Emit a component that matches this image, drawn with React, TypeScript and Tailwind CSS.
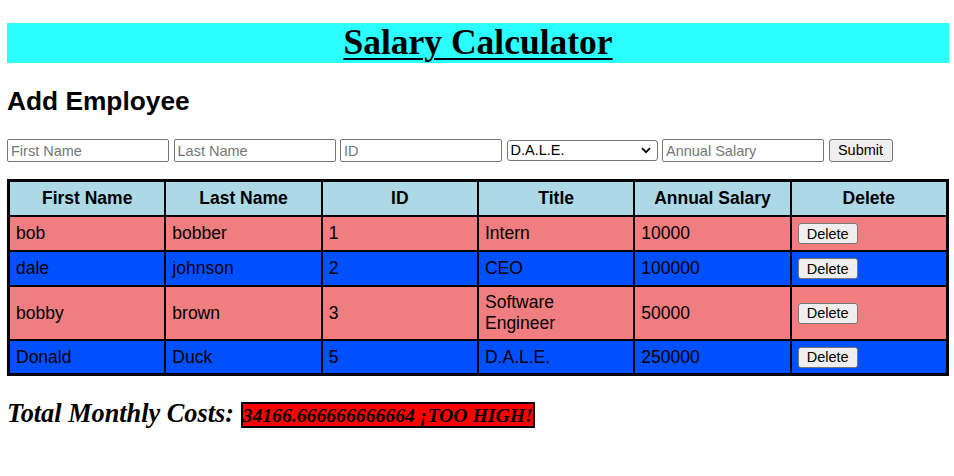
import React from "react";

const rows = [
  { first: "bob", last: "bobber", id: "1", title: "Intern", salary: "10000", bg: "bg-[#f07d80]", h: "h-[33px]" },
  { first: "dale", last: "johnson", id: "2", title: "CEO", salary: "100000", bg: "bg-[#0050ff]", h: "h-[33px]" },
  { first: "bobby", last: "brown", id: "3", title: "Software Engineer", salary: "50000", bg: "bg-[#f07d80]", h: "h-[52px]" },
  { first: "Donald", last: "Duck", id: "5", title: "D.A.L.E.", salary: "250000", bg: "bg-[#0050ff]", h: "h-[32px]" },
];

const headers = ["First Name", "Last Name", "ID", "Title", "Annual Salary", "Delete"];

function Cell({ children, bg, h }: { children: React.ReactNode; bg: string; h: string }) {
  return (
    <div className={`${bg} ${h} flex items-center px-[6px] text-[17.5px] leading-[20.6px] text-black`}>
      <div>{children}</div>
    </div>
  );
}

function DeleteButton() {
  return (
    <button className="h-[21px] w-[60px] rounded-[3px] border border-[#767676] bg-[#efefef] text-[14.5px] leading-[18px] text-black">
      Delete
    </button>
  );
}

export default function App() {
  return (
    <div className="min-h-[476px] w-[954px] bg-white pl-[7px] pt-[23px]" style={{ fontFamily: '"Liberation Sans", Arial, sans-serif' }}>
      <div className="h-[40px] w-[942px] bg-[#2bffff]">
        <h1
          className="text-center text-[35.5px] font-bold leading-[38px] text-black underline decoration-[2px] underline-offset-[4px]"
          style={{ fontFamily: '"Liberation Serif", "Times New Roman", serif' }}
        >
          Salary Calculator
        </h1>
      </div>

      <h2 className="mt-[23px] text-[26.3px] font-bold leading-[30px] text-black">Add Employee</h2>

      <div className="mt-[23px] flex items-center gap-[4.5px]">
        {["First Name", "Last Name", "ID"].map((p) => (
          <input
            key={p}
            placeholder={p}
            className="h-[23px] w-[162px] rounded-[2px] border border-[#767676] px-[3px] text-[14.5px] text-black placeholder:text-[#757575] outline-none"
          />
        ))}
        <div className="relative flex h-[21px] w-[151px] items-center rounded-[3px] border border-[#767676] bg-white px-[3px] text-[14.5px] text-black">
          <span>D.A.L.E.</span>
          <svg className="absolute right-[6px] top-[6px]" width="10" height="7" viewBox="0 0 10 7">
            <path d="M1 1.2 L5 5.2 L9 1.2" stroke="#000" strokeWidth="1.7" fill="none" />
          </svg>
        </div>
        <input
          placeholder="Annual Salary"
          className="h-[23px] w-[162px] rounded-[2px] border border-[#767676] px-[3px] text-[14.5px] text-black placeholder:text-[#757575] outline-none"
        />
        <button className="h-[23px] w-[64px] rounded-[3px] border border-[#767676] bg-[#efefef] text-[14.5px] text-black">
          Submit
        </button>
      </div>

      <div className="mt-[17px] grid w-[942px] grid-cols-6 gap-[2px] border-[3px] border-black bg-black">
        {headers.map((h) => (
          <div key={h} className="flex h-[33px] items-center justify-center bg-[#add8e6] text-[17.5px] font-bold text-black">
            {h}
          </div>
        ))}
        {rows.map((r) => (
          <React.Fragment key={r.id}>
            <Cell bg={r.bg} h={r.h}>{r.first}</Cell>
            <Cell bg={r.bg} h={r.h}>{r.last}</Cell>
            <Cell bg={r.bg} h={r.h}>{r.id}</Cell>
            <Cell bg={r.bg} h={r.h}>
              {r.title === "Software Engineer" ? (
                <>
                  Software
                  <br />
                  Engineer
                </>
              ) : (
                r.title
              )}
            </Cell>
            <Cell bg={r.bg} h={r.h}>{r.salary}</Cell>
            <Cell bg={r.bg} h={r.h}>
              <DeleteButton />
            </Cell>
          </React.Fragment>
        ))}
      </div>

      <div
        className="mt-[23px] text-[26.3px] font-bold italic leading-[30px] text-black"
        style={{ fontFamily: '"Liberation Serif", "Times New Roman", serif' }}
      >
        Total Monthly Costs:{" "}
        <span className="border-2 border-black bg-[#ff0000] text-[19.7px]">34166.666666666664 ¡TOO HIGH!</span>
      </div>
    </div>
  );
}
